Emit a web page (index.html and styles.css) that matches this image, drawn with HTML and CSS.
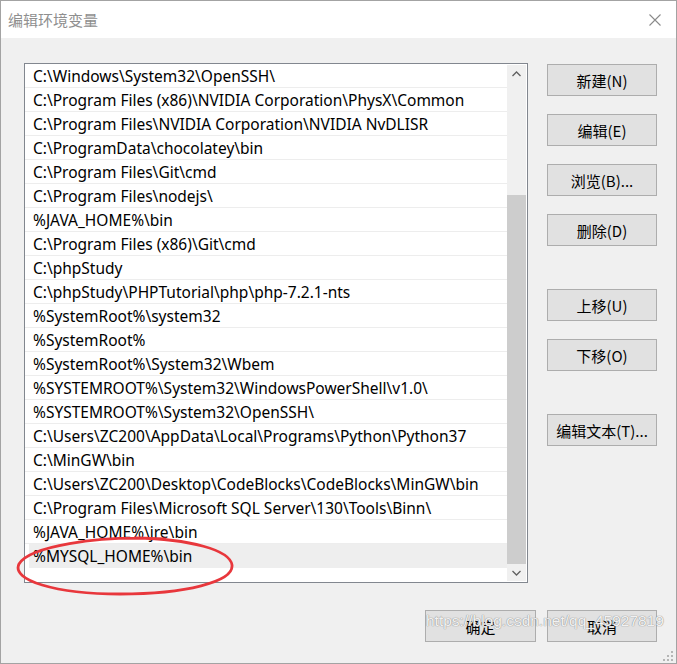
FILE: index.html
```html
<!DOCTYPE html>
<html lang="zh-CN">
<head>
<meta charset="UTF-8">
<title>编辑环境变量</title>
<link rel="stylesheet" href="styles.css">
</head>
<body>
<div class="dialog">
    <div class="titlebar">
        <span class="title">编辑环境变量</span>
        <svg class="close" width="12" height="12" viewBox="0 0 12 12">
            <path d="M0.5 0.5 L11.5 11.5 M11.5 0.5 L0.5 11.5" stroke="#8a8a8a" stroke-width="1.1" fill="none"/>
        </svg>
    </div>

    <div class="content">
        <div class="main">
            <div class="list">
                <div class="rows">
                    <div class="row">C:\Windows\System32\OpenSSH\</div>
                    <div class="row">C:\Program Files (x86)\NVIDIA Corporation\PhysX\Common</div>
                    <div class="row">C:\Program Files\NVIDIA Corporation\NVIDIA NvDLISR</div>
                    <div class="row">C:\ProgramData\chocolatey\bin</div>
                    <div class="row">C:\Program Files\Git\cmd</div>
                    <div class="row">C:\Program Files\nodejs\</div>
                    <div class="row">%JAVA_HOME%\bin</div>
                    <div class="row">C:\Program Files (x86)\Git\cmd</div>
                    <div class="row">C:\phpStudy</div>
                    <div class="row">C:\phpStudy\PHPTutorial\php\php-7.2.1-nts</div>
                    <div class="row">%SystemRoot%\system32</div>
                    <div class="row">%SystemRoot%</div>
                    <div class="row">%SystemRoot%\System32\Wbem</div>
                    <div class="row">%SYSTEMROOT%\System32\WindowsPowerShell\v1.0\</div>
                    <div class="row">%SYSTEMROOT%\System32\OpenSSH\</div>
                    <div class="row">C:\Users\ZC200\AppData\Local\Programs\Python\Python37</div>
                    <div class="row">C:\MinGW\bin</div>
                    <div class="row">C:\Users\ZC200\Desktop\CodeBlocks\CodeBlocks\MinGW\bin</div>
                    <div class="row">C:\Program Files\Microsoft SQL Server\130\Tools\Binn\</div>
                    <div class="row">%JAVA_HOME%\jre\bin</div>
                    <div class="row selected">%MYSQL_HOME%\bin</div>
                </div>
                <div class="scrollbar">
                    <div class="arrow">
                        <svg width="9" height="6" viewBox="0 0 9 6"><path d="M0.5 5 L4.5 1 L8.5 5" stroke="#606060" stroke-width="1.3" fill="none"/></svg>
                    </div>
                    <div class="track">
                        <div class="thumb"></div>
                    </div>
                    <div class="arrow">
                        <svg width="9" height="6" viewBox="0 0 9 6"><path d="M0.5 1 L4.5 5 L8.5 1" stroke="#606060" stroke-width="1.3" fill="none"/></svg>
                    </div>
                </div>
            </div>

            <div class="side">
                <button type="button">新建(N)</button>
                <button type="button">编辑(E)</button>
                <button type="button">浏览(B)...</button>
                <button type="button">删除(D)</button>
                <button type="button" class="spaced">上移(U)</button>
                <button type="button">下移(O)</button>
                <button type="button" class="spaced">编辑文本(T)...</button>
            </div>
        </div>

        <div class="actions">
            <button type="button" class="ok">确定</button>
            <button type="button">取消</button>
        </div>
    </div>

    <!-- marca vermelha em volta da linha nova -->
    <svg class="mark" width="230" height="70" viewBox="0 0 230 70">
        <path d="M150 7 C 80 3, 14 15, 4 32 C -4 48, 40 62, 105 62 C 170 62, 219 50, 217 33 C 215 18, 175 7, 120 6"
              stroke="#e8373c" stroke-width="2.8" fill="none" stroke-linecap="round"/>
    </svg>

    <div class="watermark">https://blog.csdn.net/qq_45927819</div>

    <svg class="grip" width="11" height="11" viewBox="0 0 11 11">
        <rect x="8" y="0" width="2" height="2" fill="#b5b5b5"/>
        <rect x="4" y="4" width="2" height="2" fill="#b5b5b5"/>
        <rect x="8" y="4" width="2" height="2" fill="#b5b5b5"/>
        <rect x="0" y="8" width="2" height="2" fill="#b5b5b5"/>
        <rect x="4" y="8" width="2" height="2" fill="#b5b5b5"/>
        <rect x="8" y="8" width="2" height="2" fill="#b5b5b5"/>
    </svg>
</div>
</body>
</html>
```

FILE: styles.css
```css
/* Janela de diálogo */
body {
    margin: 0;
    font-family: "Noto Sans", "Noto Sans CJK SC", sans-serif;
    background-color: #ffffff;
}

.dialog {
    position: relative;
    width: 677px;
    height: 664px;
    box-sizing: border-box;
    border: 1px solid #a3a3a3;
    display: flex;
    flex-direction: column;
    background-color: #f0f0f0;
}

.titlebar {
    height: 37px;
    background-color: #ffffff;
    display: flex;
    align-items: center;
    justify-content: space-between;
    padding: 0 15px 0 7px;
}

.title {
    font-family: "Noto Sans CJK SC", sans-serif;
    font-size: 15px;
    color: #8f8f8f;
}

.close {
    margin-top: 1px;
}

.content {
    flex: 1;
    padding: 25px 19px 0 23px;
}

.main {
    display: flex;
    gap: 19px;
}

/* Lista de caminhos */
.list {
    width: 504px;
    height: 520px;
    box-sizing: border-box;
    border: 1px solid #82878f;
    background-color: #ffffff;
    display: flex;
    overflow: hidden;
}

.rows {
    flex: 1;
}

.row {
    height: 21px;
    padding-top: 2px;
    border-bottom: 1px solid #ededed;
    padding-left: 8px;
    font-size: 15.5px;
    line-height: 21px;
    color: #000000;
    white-space: nowrap;
}

.row.selected {
    margin-left: 4px;
    padding-left: 4px;
    background-color: #eeeeee;
    border-bottom-color: #eeeeee;
}

.scrollbar {
    width: 19px;
    margin: 1px 1px 1px 0;
    background-color: #f0f0f0;
    display: flex;
    flex-direction: column;
}

.arrow {
    height: 17px;
    display: flex;
    align-items: center;
    justify-content: center;
}

.track {
    flex: 1;
    display: flex;
    flex-direction: column;
    justify-content: flex-end;
}

.thumb {
    height: 369px;
    background-color: #cdcdcd;
}

/* Botões */
button {
    font-family: "Noto Sans CJK SC", sans-serif;
    font-size: 15px;
    color: #000000;
    background-color: #e1e1e1;
    border: 1px solid #adadad;
    border-radius: 0;
    width: 110px;
    height: 32px;
    padding: 0;
    cursor: pointer;
}

.side {
    display: flex;
    flex-direction: column;
    gap: 18px;
    padding-top: 1px;
}

.side .spaced {
    margin-top: 25px;
}

.actions {
    display: flex;
    justify-content: flex-end;
    gap: 11px;
    margin-top: 27px;
}

.actions .ok {
    width: 111px;
}

.mark {
    position: absolute;
    left: 14px;
    top: 531px;
}

.watermark {
    position: absolute;
    left: 425px;
    top: 611px;
    font-family: "Liberation Sans", Arial, sans-serif;
    font-size: 15.5px;
    color: rgba(255, 255, 255, 0.9);
    text-shadow: 0 0 1px #8f8f8f, 0 0 1px #8f8f8f;
}

.grip {
    position: absolute;
    right: 2px;
    bottom: 1px;
}
```
